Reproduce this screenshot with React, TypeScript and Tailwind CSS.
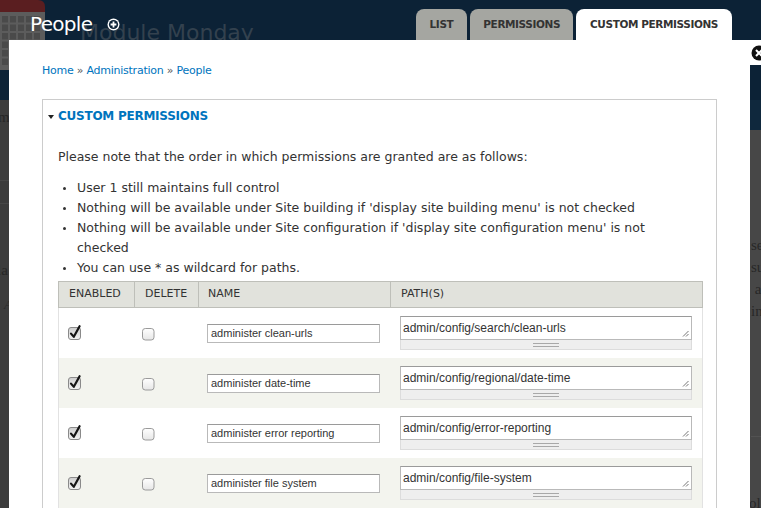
import React from "react";

const rows = [
  { name: "administer clean-urls", path: "admin/config/search/clean-urls" },
  { name: "administer date-time", path: "admin/config/regional/date-time" },
  { name: "administer error reporting", path: "admin/config/error-reporting" },
  { name: "administer file system", path: "admin/config/file-system" },
];

function CheckedBox() {
  return (
    <svg width="16" height="16" viewBox="0 0 16 16" className="block">
      <defs>
        <linearGradient id="cbg" x1="0" y1="0" x2="0" y2="1">
          <stop offset="0" stopColor="#cfcfcf" />
          <stop offset="1" stopColor="#f2f2f2" />
        </linearGradient>
      </defs>
      <rect x="1.5" y="3.5" width="12" height="12" rx="2.5" fill="url(#cbg)" stroke="#8a8a8a" />
      <path d="M4 9.6 L6.8 12.8 L12.6 2.2" fill="none" stroke="#151515" strokeWidth="2.2" strokeLinecap="round" strokeLinejoin="round" />
    </svg>
  );
}

function EmptyBox() {
  return (
    <svg width="13" height="13" viewBox="0 0 13 13" className="block">
      <defs>
        <linearGradient id="ebg" x1="0" y1="0" x2="0" y2="1">
          <stop offset="0" stopColor="#ffffff" />
          <stop offset="1" stopColor="#e6e6e6" />
        </linearGradient>
      </defs>
      <rect x="0.5" y="0.5" width="11.5" height="11.5" rx="2.8" fill="url(#ebg)" stroke="#9a9a9a" />
    </svg>
  );
}

function Resizer() {
  return (
    <svg width="7" height="7" viewBox="0 0 7 7" className="absolute right-[2px] bottom-[2px]">
      <path d="M1 6.5 L6.5 1 M4 6.5 L6.5 4" stroke="#666" strokeWidth="0.9" />
    </svg>
  );
}

export default function App() {
  return (
    <div className="relative w-[761px] h-[508px] overflow-hidden bg-[#3c3c3c] font-['DejaVu_Sans',sans-serif]">
      {/* page behind the overlay */}
      <div className="absolute inset-0">
        <div className="absolute left-0 top-0 w-full h-[100px] bg-[#0c2236]" />
        <div className="absolute right-0 top-[100px] w-[12px] h-[30px] bg-[#0f283d]" />
        <div className="absolute right-0 top-[130px] w-[12px] bottom-0 bg-[#474747]" />
        <div className="absolute right-0 top-[40px] w-[12px] h-[25px] bg-white" />
        <svg className="absolute left-0 top-0" width="46" height="72" viewBox="0 0 46 72">
          <path d="M0 0 H38 Q45 0 45 7 V12 H0 Z" fill="#5a1e20" />
          <path d="M0 12 H45 V64 Q45 70 39 70 H0 Z" fill="#5c5c5c" />
          {[0, 1, 2, 3, 4, 5].map((r) =>
            [0, 1, 2, 3, 4].map((c) => (
              <rect key={`${r}-${c}`} x={2 + c * 8} y={16 + r * 8.5} width="6" height="6.5" fill="#4a4a4a" />
            ))
          )}
        </svg>
        <div className="absolute left-[80px] top-[20px] text-[22px] leading-[26px] text-[#33414e] whitespace-nowrap">
          Module Monday
        </div>
        <div className="absolute left-[-2px] top-[106px] font-['Liberation_Serif',serif] text-[15px] text-[#262626]">m</div>
        <div className="absolute left-0 top-[180px] w-[9px] h-px bg-[#474747]" />
        <div className="absolute left-0 top-[203px] w-[9px] h-px bg-[#474747]" />
        <div className="absolute left-[-3px] top-[259px] font-['Liberation_Serif',serif] text-[15px] text-[#262626]">la</div>
        <div className="absolute left-[4px] top-[295px] font-['Liberation_Serif',serif] italic text-[13px] text-[#2a2a2a]">A</div>
        <div className="absolute left-[751px] top-[234px] font-['Liberation_Serif',serif] text-[15px] leading-[22px] text-[#282828]">
          se<br />su<br />&nbsp;a<br />in
        </div>
        <div className="absolute left-[751px] top-[436px] w-[10px] h-px bg-[#525252]" />
        <div className="absolute left-[749px] top-[492px] font-['Liberation_Serif',serif] text-[15px] text-[#282828]">ol</div>
        <svg className="absolute left-[751px] top-[45px]" width="16" height="16" viewBox="0 0 16 16">
          <circle cx="8" cy="8" r="7.5" fill="#111" />
          <path d="M5 5 L11 11 M11 5 L5 11" stroke="#fff" strokeWidth="2" />
        </svg>
      </div>

      {/* overlay */}
      <div className="relative flex flex-col h-full">
        <div className="flex h-[40px] shrink-0 justify-between">
          <div className="flex items-start pl-[30px] pt-[12px] gap-[15px]">
            <h1 className="text-white text-[20px] leading-[24px] tracking-[-0.7px]">People</h1>
            <svg width="13" height="13" viewBox="0 0 13 13" className="mt-[6px]">
              <circle cx="6.5" cy="6.5" r="6" fill="#fff" />
              <circle cx="6.5" cy="6.5" r="4.6" fill="#0c2236" />
              <path d="M6.5 3.6 V9.4 M3.6 6.5 H9.4" stroke="#fff" strokeWidth="1.8" />
            </svg>
          </div>
          <div className="flex items-end gap-[3px] pr-[29px] text-[10.5px] tracking-[-0.4px] font-bold text-[#333]">
            <div className="h-[31px] px-[14px] flex items-center rounded-t-[8px] bg-[#a5a6a1]">LIST</div>
            <div className="h-[31px] px-[13px] flex items-center rounded-t-[8px] bg-[#a5a6a1]">PERMISSIONS</div>
            <div className="h-[31px] px-[14px] flex items-center rounded-t-[8px] bg-white">CUSTOM PERMISSIONS</div>
          </div>
        </div>

        <div className="ml-[9px] w-[741px] flex-1 bg-white px-[33px] pt-[22px] overflow-hidden">
          <div className="text-[11px] tracking-[-0.25px] leading-[18px] text-[#0074bd]">
            Home <span className="text-[#555]">»</span> Administration <span className="text-[#555]">»</span> People
          </div>

          <div className="mt-[19px] border border-[#ccc] border-b-0 pl-[15px] pr-[13px] h-[500px]">
            <div className="mt-[6px] -ml-[10px] flex items-center gap-[4px] h-[20px]">
              <svg width="6" height="4" viewBox="0 0 6 4" className="mt-[1px]">
                <path d="M0 0 H6 L3 4 Z" fill="#222" />
              </svg>
              <span className="text-[12px] tracking-[-0.25px] font-bold text-[#0074bd] uppercase">Custom permissions</span>
            </div>

            <p className="mt-[21px] text-[12.5px] leading-[20px] text-[#333]">
              Please note that the order in which permissions are granted are as follows:
            </p>

            <ul className="mt-[11px] text-[12.5px] leading-[20px] text-[#333]">
              {[
                <>User 1 still maintains full control</>,
                <>Nothing will be available under Site building if 'display site building menu' is not checked</>,
                <>
                  Nothing will be available under Site configuration if 'display site configuration menu' is not
                  <br />
                  checked
                </>,
                <>You can use * as wildcard for paths.</>,
              ].map((t, i) => (
                <li key={i} className="flex">
                  <span className="w-[19px] shrink-0 flex pt-[9px] pl-[5px]">
                    <span className="block w-[3px] h-[3px] rounded-full bg-[#333]" />
                  </span>
                  <span>{t}</span>
                </li>
              ))}
            </ul>

            <div className="mt-[3px] w-[645px]">
              <div className="grid grid-cols-[75px_64px_192px_314px] h-[27px] bg-[#e1e2dc] border border-[#bebfb9] text-[11px] text-[#333] uppercase">
                <div className="flex items-center pl-[10px]">Enabled</div>
                <div className="flex items-center pl-[10px] border-l border-[#bebfb9]">Delete</div>
                <div className="flex items-center pl-[9px] border-l border-[#bebfb9]">Name</div>
                <div className="flex items-center pl-[10px] border-l border-[#bebfb9]">Path(s)</div>
              </div>
              {rows.map((r, i) => (
                <div
                  key={r.name}
                  className={`grid grid-cols-[75px_64px_192px_314px] h-[50px] border-x border-[#e2e2e2] items-center ${
                    i % 2 === 1 ? "bg-[#f3f4ee]" : "bg-white"
                  }`}
                >
                  <div className="pl-[8px] -mt-[3px]">
                    <CheckedBox />
                  </div>
                  <div className="pl-[8px] pt-[2px]">
                    <EmptyBox />
                  </div>
                  <div className="pl-[9px]">
                    <div className="w-[173px] h-[19px] border border-[#b9b9b9] border-t-[#9a9a9a] bg-white pl-[3px] flex items-center font-['Liberation_Sans',Arial,sans-serif] text-[11px] text-[#333]">
                      {r.name}
                    </div>
                  </div>
                  <div className="pl-[10px]">
                    <div className="w-[292px]">
                      <div className="relative h-[24px] border border-[#b9b9b9] border-t-[#9a9a9a] bg-white pl-[2px] pt-[4px] font-['Liberation_Sans',Arial,sans-serif] text-[12px] leading-[15px] text-[#333]">
                        {r.path}
                        <Resizer />
                      </div>
                      <div className="h-[10px] border border-t-0 border-[#dcdcdc] bg-[#eeeeee] flex flex-col items-center justify-center gap-[2px]">
                        <div className="w-[26px] h-px bg-[#a8a8a8]" />
                        <div className="w-[26px] h-px bg-[#a8a8a8]" />
                      </div>
                    </div>
                  </div>
                </div>
              ))}
            </div>
          </div>
        </div>
      </div>
    </div>
  );
}
